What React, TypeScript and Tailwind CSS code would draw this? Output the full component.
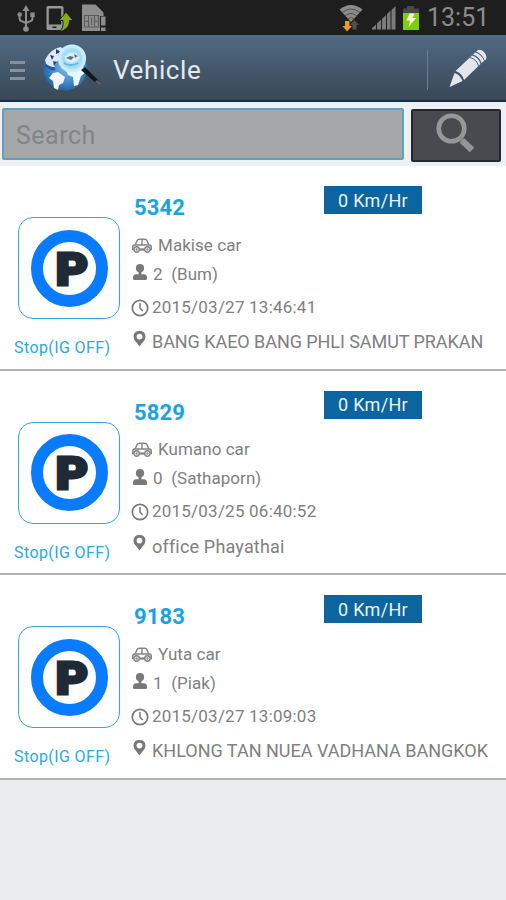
import React from 'react';

interface Vehicle {
  id: string;
  name: string;
  driver: string;
  time: string;
  place: string;
  placeClass: string;
}

const vehicles: Vehicle[] = [
  { id: '5342', name: 'Makise car', driver: '2  (Bum)', time: '2015/03/27 13:46:41', place: 'BANG KAEO BANG PHLI SAMUT PRAKAN', placeClass: 'tracking-[-0.06px]' },
  { id: '5829', name: 'Kumano car', driver: '0  (Sathaporn)', time: '2015/03/25 06:40:52', place: 'office Phayathai', placeClass: 'tracking-[0.18px]' },
  { id: '9183', name: 'Yuta car', driver: '1  (Piak)', time: '2015/03/27 13:09:03', place: 'KHLONG TAN NUEA VADHANA BANGKOK', placeClass: 'tracking-[0px]' },
];

const UsbIcon = () => (
  <svg width="18" height="28" viewBox="0 0 18 28" fill="none" stroke="#8e8e8e" strokeWidth="2">
    <path d="M9 6v18M2.5 11v3.5q0 2 2 2.6L9 19M15.500 11v3.500q0 2-2 2.600L9 19" />
    <path d="M9 1l3.500 6h-7z" fill="#8e8e8e" stroke="none" />
    <circle cx="2.700" cy="10.500" r="2.300" fill="#8e8e8e" stroke="none" />
    <path d="M13.300 8.500h4.400v4.400h-4.400z" fill="#8e8e8e" stroke="none" />
    <circle cx="9" cy="25" r="2.800" fill="#8e8e8e" stroke="none" />
  </svg>
);

const PhoneIcon = () => (
  <svg width="28" height="28" viewBox="0 0 28 28">
    <path fillRule="evenodd" fill="#989898" d="M2 1h14q1.500 0 1.500 1.500v21Q17.500 25 16 25H2Q.5 25 .5 23.500v-21Q.5 1 2 1zm.8 2.500v16h12.400v-16zM6.500 21.500v1.500h4V21.500z" />
    <path d="M20 7l7 8.500h-3.500c0 6-3.500 9.500-10 11.500 3-3 4-6 3.500-11.500h-4z" fill="#86ac12" stroke="#1d1d1d" strokeWidth="1" />
  </svg>
);

const SimIcon = () => (
  <svg width="26" height="28" viewBox="0 0 26 28">
    <path d="M0 .5h13.500l8 8v3.500h-3.500v15H0z" fill="#8e8e8e" />
    <path d="M2.500 11.500h14v11.500h-14zM6.500 11.500v11.500M12.500 11.500v11.500M2.500 17.200h4M12.500 17.200h4M9.500 13.500v7.500" fill="none" stroke="#5c5c5c" strokeWidth="1.100" />
    <path d="M19 12.500h4.500v9H19zM19 23.500h4.500V27H19z" fill="#8e8e8e" />
  </svg>
);

const WifiIcon = () => (
  <svg width="24" height="28" viewBox="0 0 24 28" fill="none">
    <path d="M12 18L.5 5.500Q12-3.500 23.500 5.500z" fill="#8b8b8b" />
    <path d="M3 8.500Q12 1.500 21 8.500M6 12q6-5 12 0M8.500 15q3.500-3 7 0" stroke="#444" strokeWidth="0.800" />
    <path d="M6 17h4.500v5H13l-5 5.500L3.500 22H6z" fill="#eb982e" />
    <path d="M13.500 25.500v-4.500H11l4.500-5 4.500 5h-2.500v4.500z" fill="#505050" />
  </svg>
);

const SignalIcon = () => (
  <svg width="24" height="24" viewBox="0 0 24 24" fill="#7b7b7b">
    <path d="M0 23.500V22l4-3.500v5zM5 23.500v-6l4-4v10zM10 23.500V13l4-4v14.500zM15 23.500V8l3.500-3.500v19zM19.500 23.500V4L23.500 0v23.500z" />
  </svg>
);

const BatteryIcon = () => (
  <svg width="18" height="26" viewBox="0 0 18 26">
    <path d="M5 1h7v2.500h5V9H1V3.500h4z" fill="#484848" />
    <path d="M1 8h16v17H1z" fill="#82d000" />
    <path d="M7.500 8.500h5l-2 4.500h3.500l-7.500 9 1.500-6.500H4.500z" fill="#f2f7e8" />
  </svg>
);

const GlobeIcon = () => (
  <svg width="62" height="50" viewBox="0 0 62 50">
    <defs>
      <radialGradient id="globe" cx="55%" cy="45%" r="60%">
        <stop offset="0" stopColor="#82c3f3" />
        <stop offset="0.600" stopColor="#3f8bcd" />
        <stop offset="1" stopColor="#225b9a" />
      </radialGradient>
      <radialGradient id="lens">
        <stop offset="0" stopColor="#e2f5fd" />
        <stop offset="0.650" stopColor="#9bdbf2" />
        <stop offset="1" stopColor="#d8f3fc" />
      </radialGradient>
    </defs>
    <circle cx="24" cy="25.500" r="22" fill="url(#globe)" />
    <path d="M4 17Q9 6 20 4l4 5-5 3-1 5-6 4 2 3-8 0z" fill="#dfe8f4" />
    <path d="M12 30l5-1 7 5-2 6-4 2-1 5-4-2-1-7-4-3z" fill="#f1f5fa" />
    <path d="M25 27l7-4 10 1 3 5-5 4-3 9-4 1-1-9-5-2z" fill="#edf5fc" />
    <path d="M9 12l4 1-2 4zM15 6l5 3-5 2zM12 18l4 1-3 3zM17 12l4-2-1 5z" fill="#243e86" />
    <path d="M4 22q6 4 10 4" fill="none" stroke="#2c579b" strokeWidth="3" />
    <path d="M40 27l4-3 15 15-3 2z" fill="#111820" />
    <path d="M56 37l4 3-2 2-4-3z" fill="#63615c" />
    <circle cx="31" cy="15.500" r="13.300" fill="url(#lens)" stroke="#cdeefa" strokeWidth="1.500" />
    <path d="M24 14l5-4 7 1 3 4-5 3-4 1-5-2z" fill="#e8eef0" />
    <path d="M25 15l4-2 4 1-3 3zM33 11l4 2-3 2z" fill="#467a91" />
    <path d="M23 20q7 4 14 0" fill="none" stroke="#62b7dd" strokeWidth="2" />
  </svg>
);

const PencilIcon = () => (
  <svg width="40" height="40" viewBox="0 0 40 40">
    <g fill="#e3e7ec">
      <path d="M1.500 38l5-14q5 1 8 8z" />
      <path d="M7.500 22L24 6.500q7 2 8.500 8.500L16 31q-2-7-8.500-9z" />
      <path d="M25 5.500l2-2q7 2 9 8.500l-2.500 2q-2-6.500-8.500-8.500z" />
      <path d="M28 2.500q4-3.500 8 .5t1.500 8l-1 .5Q34.500 5 28 2.500z" />
    </g>
    <path d="M22 8.500q7 2 8.500 8.500" fill="none" stroke="#536170" strokeWidth="1" />
  </svg>
);

const SearchIcon = () => (
  <svg width="42" height="42" viewBox="0 0 42 42" fill="none">
    <circle cx="16.500" cy="15.500" r="12.800" stroke="#969798" strokeWidth="4.600" />
    <path d="M25 25l2.500 2.500" stroke="#858788" strokeWidth="4" />
    <path d="M27 27.500l10 9.500" stroke="#939596" strokeWidth="6.500" />
  </svg>
);

const CarIcon = () => (
  <svg width="20" height="16" viewBox="0 0 20 16" fill="none" stroke="#858282" strokeWidth="1.400">
    <path d="M3.200 7L5 2.800Q5.700 1.200 7.500 1.200h5q1.800 0 2.500 1.600L16.800 7M10 1.200V7" />
    <path d="M2.800 7h14.400Q19.300 7 19.300 9.500v2H.7v-2Q.7 7 2.800 7z" />
    <circle cx="4.600" cy="11.500" r="2.700" fill="#fff" />
    <circle cx="15.400" cy="11.500" r="2.700" fill="#fff" />
    <path d="M7.500 11.500h5" strokeWidth="2" />
    <circle cx="4.600" cy="11.500" r="0.500" />
    <circle cx="15.400" cy="11.500" r="0.500" />
  </svg>
);

const DriverIcon = () => (
  <svg width="14" height="17" viewBox="0 0 14 17" fill="#7a7777">
    <circle cx="7" cy="4.200" r="4.100" />
    <path d="M5.200 7h3.600l-.6 3.300h2.800q3 .4 3 3.200v1.200q0 1.300-1.300 1.300H1.300Q0 16 0 14.700v-1.200q0-2.800 3-3.200h2.800z" />
  </svg>
);

const ClockIcon = () => (
  <svg width="18" height="18" viewBox="0 0 18 18" fill="none" stroke="#7a7777">
    <circle cx="9" cy="9" r="7.700" strokeWidth="1.700" />
    <path d="M9 4v5.300l2.800 2.700" strokeWidth="1.500" />
  </svg>
);

const PinIcon = () => (
  <svg width="13" height="16" viewBox="0 0 13 16" fill="#7a7777">
    <path fillRule="evenodd" d="M6.500 0Q12.500 0 12.500 5.800q0 2.700-3 5.700l-3 4-3-4Q.5 8.500.5 5.800.5 0 6.500 0zm0 2.700a2.900 2.900 0 100 5.800 2.900 2.900 0 000-5.800z" />
  </svg>
);

const VehicleRow = ({ vehicle }: { vehicle: Vehicle }) => (
  <div className="flex h-[204.600px] border-b-2 border-[#b2b2b2] bg-white">
    <div className="flex w-[131px] shrink-0 flex-col pl-[18px] pt-[51px]">
      <div className="flex h-[102px] w-[102px] items-center justify-center rounded-[15px] border border-[#35a5dd]">
        <div className="flex h-[77px] w-[77px] items-center justify-center rounded-full border-[12px] border-[#087bff]">
          <span className="origin-center scale-x-110 pl-[6px] pt-[2px] text-[45px] font-black leading-none text-[#202a37] [-webkit-text-stroke:3px_#202a37] [text-shadow:1px_-1px_1px_#999]">P</span>
        </div>
      </div>
      <span className="-ml-1 mt-[19px] whitespace-nowrap text-[16px] leading-5 tracking-[0.400px] text-[#28aae6]">Stop(IG OFF)</span>
    </div>
    <div className="flex min-w-0 flex-1 flex-col whitespace-pre text-[17px] text-[#808080]">
      <div className="flex h-[64px] pt-5">
        <span className="w-[193px] pl-[3px] pt-[8px] text-[22px] font-bold leading-7 tracking-[0.100px] text-[#18a3e2]">{vehicle.id}</span>
        <span className="flex h-[28px] w-[98px] items-center justify-center bg-[#0d65a0] text-[18px] tracking-[0.300px] text-[#e9f2fa]">0 Km/Hr</span>
      </div>
      <div className="flex h-[31px] items-center gap-[6px] pl-px tracking-[0.050px]"><CarIcon /><span>{vehicle.name}</span></div>
      <div className="flex h-[27px] items-center gap-[6px] pl-[2px] tracking-[0.050px]">
        <div className="mb-1"><DriverIcon /></div>
        <span>{vehicle.driver}</span>
      </div>
      <div className="flex h-[39px] items-center gap-[3px] tracking-[0.220px]"><ClockIcon /><span>{vehicle.time}</span></div>
      <div className="flex h-[29px] items-center gap-[6px] pl-[2px] text-[18px]">
        <div className="mb-1.5"><PinIcon /></div>
        <span className={vehicle.placeClass}>{vehicle.place}</span>
      </div>
    </div>
  </div>
);

export default function App() {
  return (
    <div className="flex h-[900px] w-[506px] flex-col overflow-hidden bg-[#ebecee] font-['Roboto',sans-serif]">
      {/* Status bar */}
      <div className="flex h-[35px] shrink-0 items-center bg-[#1e1e1e] pl-[17px] pr-[18px]">
        <UsbIcon />
        <div className="ml-[11px] mt-0.5"><PhoneIcon /></div>
        <div className="ml-[8px]"><SimIcon /></div>
        <div className="ml-auto flex items-center">
          <WifiIcon />
          <div className="ml-[9px]"><SignalIcon /></div>
          <div className="ml-[6px]"><BatteryIcon /></div>
          <span className="ml-[7px] w-[61px] whitespace-nowrap text-[25px] leading-8 text-[#8c8c8c]">13:51</span>
        </div>
      </div>

      {/* Title bar */}
      <div className="flex h-[67px] shrink-0 items-center border-b-2 border-[#0d324d] bg-linear-to-b from-[#506a84] to-[#394855] pl-[10px]">
        <div className="flex flex-col gap-[5px] pt-[5px]">
          <span className="h-[3px] w-[15px] bg-[#87919a]" />
          <span className="h-[3px] w-[15px] bg-[#87919a]" />
          <span className="h-[3px] w-[15px] bg-[#87919a]" />
        </div>
        <div className="ml-[16px] mt-px"><GlobeIcon /></div>
        <h1 className="ml-[10px] pt-1 text-[26px] leading-8 tracking-[0.600px] text-[#e6eaee]">Vehicle</h1>
        <div className="ml-auto mt-1 h-10 w-px bg-[#6c7f91]" />
        <div className="ml-[20px] mr-[18px] mt-[3px]"><PencilIcon /></div>
      </div>

      {/* Search */}
      <div className="flex h-[64px] shrink-0 items-start bg-[#eff0f3] pl-[2px] pt-[6px]">
        <div className="flex h-[52px] w-[402px] items-center rounded-xs border-2 border-[#5ba1c4] bg-[#a5a7a9] pl-[12px] pt-[3px] text-[25px] tracking-[0.500px] text-[#828485]">Search</div>
        <button className="ml-[7px] mt-px flex h-[53px] w-[90px] items-start justify-center rounded-xs border-2 border-[#22282e] bg-[#474b4f] pt-[2px]">
          <SearchIcon />
        </button>
      </div>

      {vehicles.map((v) => <VehicleRow key={v.id} vehicle={v} />)}
    </div>
  );
}
